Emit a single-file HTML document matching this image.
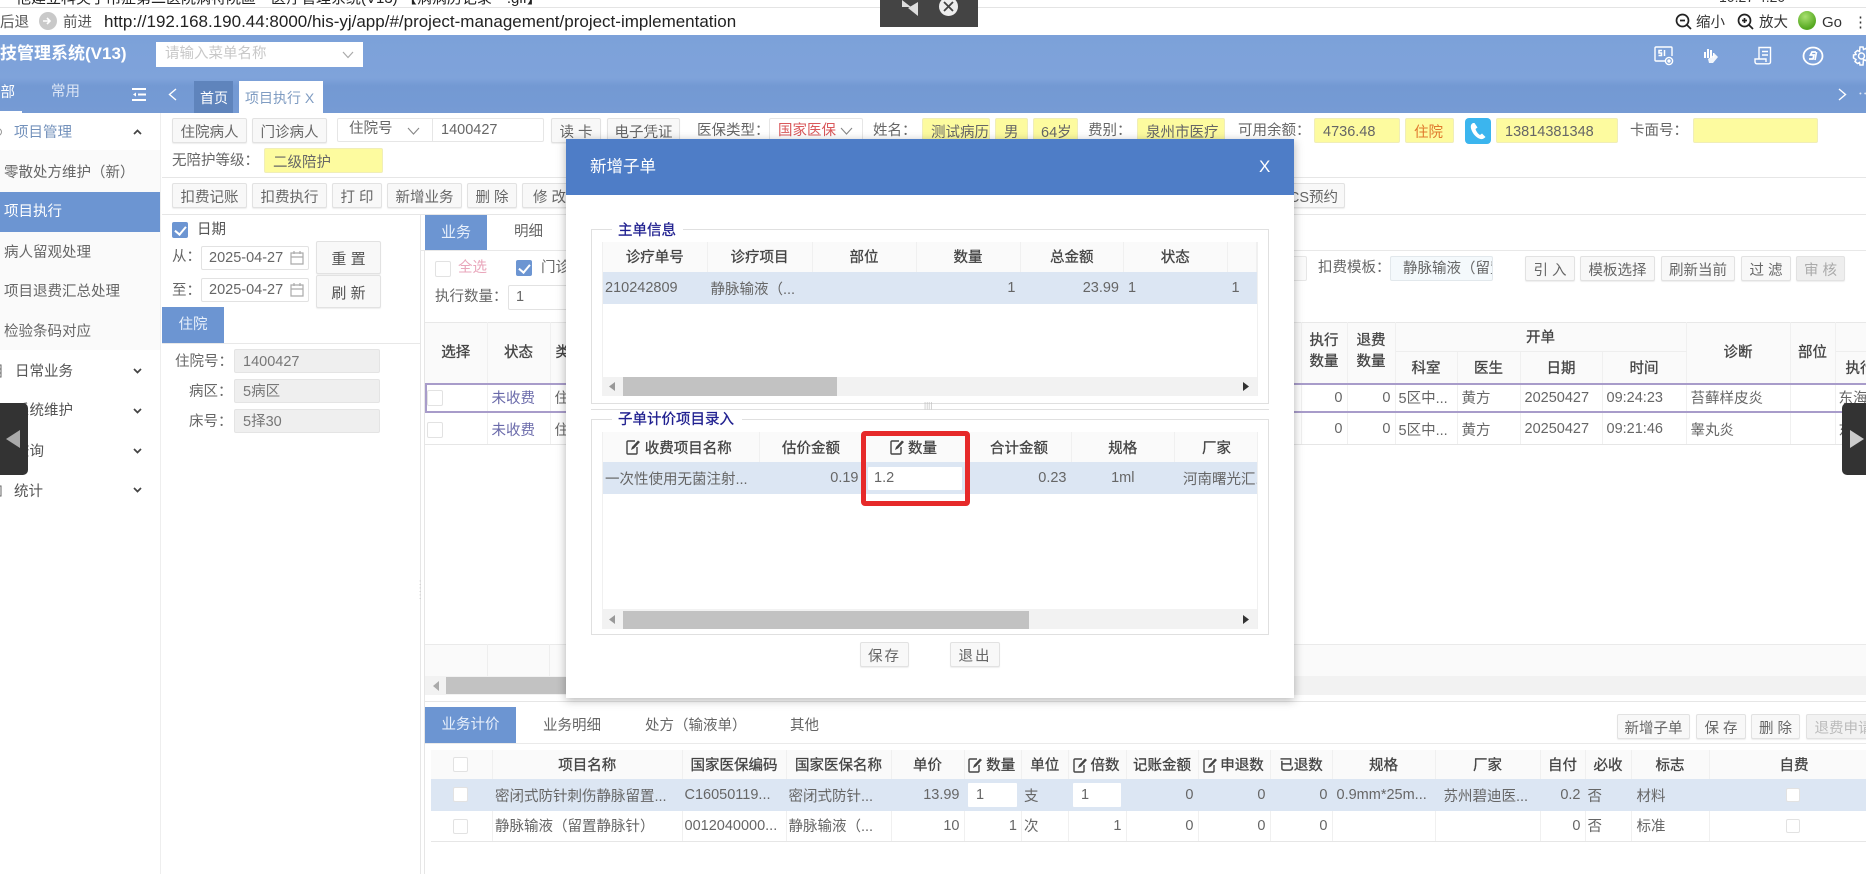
<!DOCTYPE html>
<html lang="zh-CN"><head><meta charset="utf-8"><title>项目执行</title>
<style>
*{box-sizing:border-box}
html,body{margin:0;padding:0;width:1866px;height:874px;overflow:hidden;background:#fff}
body{position:relative;font-family:"Liberation Sans","Noto Sans CJK SC",sans-serif;font-size:14.5px;color:#555;filter:blur(.3px)}
.a{position:absolute}
.t{position:absolute;white-space:nowrap;line-height:20px;height:20px;margin-top:1px}
.b{position:absolute;display:flex;align-items:center;justify-content:center;white-space:nowrap;border:1px solid #e2e2e2;border-radius:2px;background:#f8f8f8;color:#666;height:25px;box-shadow:0 1px 1px #eee;padding-top:2px}
.y{position:absolute;display:flex;align-items:center;white-space:nowrap;overflow:hidden;background:#fdfb9f;border:1px solid #f0eeb8;border-radius:2px;height:25px;top:118px;color:#666;padding-top:2px}
.f{position:absolute;left:234px;width:146px;height:24px;background:#efefef;border:1px solid #e4e4e4;border-radius:2px;padding-left:8px;line-height:25px;color:#777}
.d{position:absolute;left:201px;width:108px;height:24px;border:1px solid #e2e2e2;border-radius:2px;padding-left:7px;line-height:22px;color:#666;background:#fff}
.n{position:absolute;left:4px;white-space:nowrap;line-height:20px;color:#666;margin-top:1px}
.ck{position:absolute;width:16px;height:16px;border-radius:2px;background:#6c95d2}
.ck:after{content:"";position:absolute;left:5px;top:2px;width:5px;height:9px;border:solid #fff;border-width:0 2px 2px 0;transform:rotate(40deg)}
.e{position:absolute;width:16px;height:16px;background:#fff;border:1px solid #e2e2e2;border-radius:2px}
table{border-collapse:collapse;table-layout:fixed;position:absolute;color:#666;background:#fff}
th,td{padding:0 4px;overflow:hidden;white-space:nowrap;font-weight:400;border-right:1px solid #f0f0f0}
th{background:#fafafa;color:#444;-webkit-text-stroke:.3px #444;text-align:center;padding:0}
td.r{text-align:right}
td.p2{padding-left:2px}
tr.s td{background:#dce6f3;border-right-color:#dce6f3}
tr.l td{border-bottom:1px solid #e6e6e6}
.sb{position:absolute;background:#f2f2f2}
.th{position:absolute;top:0;bottom:0;background:#c2c2c2}
.wi{position:absolute;background:#fff;border-radius:1px}
svg{position:absolute;overflow:visible}
</style></head><body>

<svg width="0" height="0" style="position:absolute"><defs>
<symbol id="ed" viewBox="0 0 14 16"><path d="M9 2H2a1 1 0 0 0-1 1v11a1 1 0 0 0 1 1h8a1 1 0 0 0 1-1V8" fill="none" stroke="#444" stroke-width="1.4"/><path d="M5 11l1-3 6-6.5 2 1.5-6 6.5z" fill="#444"/></symbol>
<symbol id="cal" viewBox="0 0 14 15"><path d="M1 3h12v11H1zM1 7h12M4 1v3M10 1v3" fill="none" stroke="#aaa" stroke-width="1.2"/></symbol>
</defs></svg>

<!-- browser chrome -->
<div class="t" style="left:16px;top:-12px;font-size:15px;color:#222">他建立科尖于吊症第二医院病特院區一医疗管理系统(V13) 【病病历记录一.gif】</div>
<div class="t" style="left:1719px;top:-14px;font-size:14px;color:#333">10:27 4:20</div>
<div class="a" style="left:0;top:7px;width:1866px;height:1px;background:#e4e4e4"></div>
<div class="t" style="left:0;top:12px;color:#555;font-size:14.5px">后退</div>
<div class="a" style="left:39px;top:12px;width:18px;height:18px;border-radius:50%;background:#c9c9c9"></div>
<svg style="left:43px;top:16px" width="10" height="10"><path d="M0 5h7M4 2l3 3-3 3" fill="none" stroke="#fff" stroke-width="1.6"/></svg>
<div class="t" style="left:63px;top:12px;color:#555;font-size:14.5px">前进</div>
<div class="t" style="left:104px;top:11px;font-size:17px;color:#222" id="url">http://192.168.190.44:8000/his-yj/app/#/project-management/project-implementation</div>
<svg style="left:1675px;top:13px" width="18" height="18"><circle cx="7.5" cy="7.5" r="6" fill="none" stroke="#222" stroke-width="1.7"/><path d="M5 7.5h5M12 12l4 4" stroke="#222" stroke-width="1.7"/></svg>
<div class="t" style="left:1696px;top:12px;color:#333">缩小</div>
<svg style="left:1737px;top:13px" width="18" height="18"><circle cx="7.5" cy="7.5" r="6" fill="none" stroke="#222" stroke-width="1.7"/><path d="M5 7.5h5M7.5 5v5M12 12l4 4" stroke="#222" stroke-width="1.7"/></svg>
<div class="t" style="left:1759px;top:12px;color:#333">放大</div>
<div class="a" style="left:1798px;top:11px;width:18px;height:19px;border-radius:50%;background:radial-gradient(circle at 40% 30%,#a8e070,#55a820 70%)"></div>
<div class="t" style="left:1822px;top:12px;color:#333;font-size:15px">Go</div>
<div class="t" style="left:1853px;top:12px;color:#333;font-size:15px">⋮</div>

<!-- header -->
<div class="a" style="left:0;top:35px;width:1866px;height:78px;background:linear-gradient(#7ca1d9 0,#7fa3da 55%,#7399d3 65%,#769bd4 100%)"></div>
<div class="t" style="left:-17px;top:43px;font-size:17px;font-weight:700;color:#fff">科技管理系统(V13)</div>
<div class="a" style="left:156px;top:42px;width:207px;height:25px;background:#fff"></div>
<div class="t" style="left:165px;top:43px;color:#c8c8c8">请输入菜单名称</div>
<svg style="left:342px;top:51px" width="12" height="8"><path d="M1 1l5 5.5L11 1" fill="none" stroke="#aaa" stroke-width="1.2"/></svg>
<!-- header icons -->
<svg style="left:1654px;top:46px" width="22" height="22" fill="none" stroke="#fff" stroke-width="1.4"><path d="M11 15H2a1 1 0 0 1-1-1V2a1 1 0 0 1 1-1h15a1 1 0 0 1 1 1v8"/><circle cx="15" cy="15" r="3.6"/><circle cx="15" cy="15" r="1" fill="#fff"/><path d="M8 4.500H5v2.500h2.500v2.500H4.500M10.500 4v6" stroke-width="1.500"/></svg>
<svg style="left:1702px;top:47px" width="18" height="18" fill="#fff"><path d="M2 5h2v6H2zM5 2h2v9H5zM8 3h2v8H8zM11 6h1.500v4l-1.500 1z"/><path d="M6 12l7-5 3 3-5 6H7z" opacity=".9"/></svg>
<svg style="left:1754px;top:46px" width="20" height="20" fill="none" stroke="#fff" stroke-width="1.400"><path d="M5 13V1.500h11.500V16a1.800 1.800 0 0 1-1.800 1.800H3a2 2 0 0 1-2-2V13h11v3"/><path d="M8 5.500h6M8 9h6" /></svg>
<svg style="left:1803px;top:46px" width="21" height="20" fill="none" stroke="#fff" stroke-width="1.800"><ellipse cx="10" cy="10" rx="9.500" ry="8.500"/><path d="M13 6H9L7.500 9H11l-1 4H6M13.500 6l-1.500 8" stroke-width="1.700"/></svg>
<svg style="left:1852px;top:46px" width="20" height="20" fill="none" stroke="#fff" stroke-width="1.500"><circle cx="9.500" cy="10" r="3"/><path d="M8 1h3l.5 2.500 2-1 2.500 2-1 2 2.500.5v3l-2.500.5 1 2-2.500 2-2-1L11 19H8l-.5-2.500-2 1-2.500-2 1-2L1.500 12V9L4 8.500l-1-2 2.500-2 2 1z"/></svg>
<!-- tabs row -->
<div class="t" style="left:-14px;top:82px;color:#fff">全部</div>
<div class="a" style="left:0;top:111px;width:22px;height:2px;background:#fff"></div>
<div class="t" style="left:51px;top:81px;color:#dbe5f5">常用</div>
<svg style="left:132px;top:88px" width="14" height="13" fill="none" stroke="#fff" stroke-width="2"><path d="M0 1h14M6 6.500h8M0 12h14"/><path d="M4 4.500L1 6.500l3 2z" fill="#fff" stroke="none"/></svg>
<svg style="left:168px;top:88px" width="9" height="13" fill="none" stroke="#fff" stroke-width="1.400"><path d="M8 1L1.500 6.500 8 12"/></svg>
<div class="a" style="left:194px;top:81px;width:39px;height:32px;background:#5f84bc"></div>
<div class="t" style="left:200px;top:87px;color:#fff;font-size:14px">首页</div>
<div class="a" style="left:239px;top:81px;width:84px;height:32px;background:#fff"></div>
<div class="t" style="left:245px;top:87px;color:#7f9cc2;font-size:14px">项目执行 X</div>
<svg style="left:1838px;top:88px" width="9" height="13" fill="none" stroke="#fff" stroke-width="1.400"><path d="M1 1l6.500 5.500L1 12"/></svg>
<div class="t" style="left:1858px;top:84px;color:#dfe8f6">⋯</div>

<!-- sidebar -->
<div class="a" style="left:0;top:113px;width:161px;height:761px;background:#fff;border-right:1px solid #eee"></div>
<div class="a" style="left:0;top:150px;width:160px;height:200px;background:#fafafa"></div>
<div class="t" style="left:14px;top:122px;color:#7391bb">项目管理</div>
<svg style="left:133px;top:129px" width="9" height="6" fill="none" stroke="#444" stroke-width="1.700"><path d="M1 5l3.500-3.500L8 5"/></svg>
<div class="n" style="top:162px">零散处方维护（新）</div>
<div class="a" style="left:0;top:192px;width:160px;height:40px;background:#6c95d2"></div>
<div class="n" style="top:201px;color:#fff">项目执行</div>
<div class="n" style="top:242px">病人留观处理</div>
<div class="n" style="top:281px">项目退费汇总处理</div>
<div class="n" style="top:321px">检验条码对应</div>
<div class="t" style="left:15px;top:361px">日常业务</div>
<div class="t" style="left:15px;top:400px">系统维护</div>
<div class="t" style="left:15px;top:441px">查询</div>
<div class="t" style="left:14px;top:481px">统计</div>
<svg style="left:-2px;top:126px" width="6" height="12" fill="none" stroke="#999"><circle cx="0" cy="6" r="3.500"/></svg>
<svg style="left:-2px;top:364px" width="6" height="14" fill="none" stroke="#666"><path d="M0 1h3v12H0M0 5h3M0 9h3"/></svg>
<svg style="left:-2px;top:485px" width="6" height="12" fill="none" stroke="#666"><path d="M0 1h3v10H0"/></svg>
<svg style="left:133px;top:368px" width="9" height="6" fill="none" stroke="#444" stroke-width="1.700"><path d="M1 1l3.500 3.500L8 1"/></svg>
<svg style="left:133px;top:408px" width="9" height="6" fill="none" stroke="#444" stroke-width="1.700"><path d="M1 1l3.500 3.500L8 1"/></svg>
<svg style="left:133px;top:448px" width="9" height="6" fill="none" stroke="#444" stroke-width="1.700"><path d="M1 1l3.500 3.500L8 1"/></svg>
<svg style="left:133px;top:487px" width="9" height="6" fill="none" stroke="#444" stroke-width="1.700"><path d="M1 1l3.500 3.500L8 1"/></svg>

<!-- patient row -->
<div class="b" style="left:172px;top:118px;width:75px">住院病人</div>
<div class="b" style="left:252px;top:118px;width:75px">门诊病人</div>
<div class="a" style="left:337px;top:118px;width:207px;height:24px;border:1px solid #e6e6e6;border-radius:2px"></div>
<div class="a" style="left:432px;top:118px;width:1px;height:24px;background:#e6e6e6"></div>
<div class="t" style="left:349px;top:118px;color:#666">住院号</div>
<svg style="left:407px;top:127px" width="13" height="8" fill="none" stroke="#888" stroke-width="1.100"><path d="M1 1l5.500 6L12 1"/></svg>
<div class="t" style="left:441px;top:119px;color:#666">1400427</div>
<div class="b" style="left:551px;top:118px;width:50px">读 卡</div>
<div class="b" style="left:607px;top:118px;width:73px">电子凭证</div>
<div class="t" style="left:697px;top:120px;color:#666">医保类型：</div>
<div class="a" style="left:769px;top:118px;width:94px;height:24px;border:1px solid #e6e6e6;border-radius:2px"></div>
<div class="t" style="left:778px;top:120px;color:#d9585b">国家医保</div>
<svg style="left:840px;top:127px" width="13" height="8" fill="none" stroke="#888" stroke-width="1.100"><path d="M1 1l5.500 6L12 1"/></svg>
<div class="t" style="left:873px;top:120px;color:#666">姓名：</div>
<div class="y" style="left:922px;width:68px;padding-left:8px">测试病历</div>
<div class="y" style="left:995px;width:33px;padding-left:8px">男</div>
<div class="y" style="left:1033px;width:45px;padding-left:7px">64岁</div>
<div class="t" style="left:1088px;top:120px;color:#666">费别：</div>
<div class="y" style="left:1137px;width:88px;padding-left:8px">泉州市医疗</div>
<div class="t" style="left:1238px;top:120px;color:#666">可用余额：</div>
<div class="y" style="left:1314px;width:86px;padding-left:8px">4736.48</div>
<div class="y" style="left:1405px;width:49px;padding-left:8px;color:#e0792e">住院</div>
<div class="a" style="left:1465px;top:118px;width:26px;height:26px;border-radius:4px;background:#3bb5ee"></div>
<svg style="left:1470px;top:122px" width="17" height="18"><path d="M3 1c-2 1-3 3-1.500 7s5 8 9 9c2 .5 3.500-.5 5-2l-3.500-3.500-2 1.500C8 12 6 9 5.500 7l2-1.500L4.500 1z" fill="#fff"/></svg>
<div class="y" style="left:1496px;width:122px;padding-left:8px">13814381348</div>
<div class="t" style="left:1630px;top:120px;color:#666">卡面号：</div>
<div class="y" style="left:1693px;width:125px"></div>
<div class="t" style="left:172px;top:150px;color:#666">无陪护等级：</div>
<div class="y" style="left:264px;top:148px;width:119px;padding-left:8px">二级陪护</div>
<div class="a" style="left:162px;top:177px;width:1704px;height:1px;background:#e6e6e6"></div>
<!-- toolbar -->
<div class="b" style="left:172px;top:183px;width:75px">扣费记账</div>
<div class="b" style="left:252px;top:183px;width:75px">扣费执行</div>
<div class="b" style="left:332px;top:183px;width:50px">打 印</div>
<div class="b" style="left:387px;top:183px;width:75px">新增业务</div>
<div class="b" style="left:467px;top:183px;width:50px">删 除</div>
<div class="b" style="left:522px;top:183px;width:55px">修 改</div>
<div class="b" style="left:1270px;top:183px;width:75px;justify-content:flex-end;padding-right:6px">CS预约</div>
<div class="a" style="left:162px;top:214px;width:1704px;height:1px;background:#e6e6e6"></div>

<!-- left panel -->
<div class="ck" style="left:172px;top:222px"></div>
<div class="t" style="left:197px;top:219px;color:#555">日期</div>
<div class="t" style="left:172px;top:246px;color:#666">从：</div>
<div class="d" style="top:246px">2025-04-27</div>
<svg style="left:290px;top:250px" width="14" height="15"><use href="#cal"/></svg>
<div class="b" style="left:316px;top:241px;width:65px;height:33px;font-size:15px;color:#555">重 置</div>
<div class="t" style="left:172px;top:280px;color:#666">至：</div>
<div class="d" style="top:278px">2025-04-27</div>
<svg style="left:290px;top:282px" width="14" height="15"><use href="#cal"/></svg>
<div class="b" style="left:316px;top:275px;width:65px;height:33px;font-size:15px;color:#555">刷 新</div>
<div class="a" style="left:162px;top:307px;width:62px;height:37px;background:#6c95d2;color:#e8f0fb;text-align:center;line-height:36px">住院</div>
<div class="a" style="left:162px;top:343px;width:258px;height:1px;background:#e8e8e8"></div>
<div class="t" style="left:175px;top:351px;color:#666">住院号：</div>
<div class="f" style="top:349px">1400427</div>
<div class="t" style="left:189px;top:381px;color:#666">病区：</div>
<div class="f" style="top:379px">5病区</div>
<div class="t" style="left:189px;top:411px;color:#666">床号：</div>
<div class="f" style="top:409px">5择30</div>
<div class="a" style="left:420px;top:215px;width:1px;height:659px;background:#e6e6e6"></div>
<div class="a" style="left:424px;top:250px;width:1px;height:624px;background:#e6e6e6"></div>
<div class="t" style="left:419px;top:578px;color:#bbb;font-size:8px;line-height:7px;width:4px;white-space:normal;height:auto">: : :</div>

<!-- main area -->
<div class="a" style="left:425px;top:215px;width:62px;height:35px;background:#6c95d2;color:#e8f0fb;text-align:center;line-height:35px;font-size:15px">业务</div>
<div class="t" style="left:514px;top:221px;color:#666">明细</div>
<div class="a" style="left:420px;top:250px;width:1446px;height:1px;background:#e8e8e8"></div>
<div class="e" style="left:435px;top:261px"></div>
<div class="t" style="left:458px;top:257px;color:#e9a6bb">全选</div>
<div class="ck" style="left:516px;top:260px"></div>
<div class="t" style="left:541px;top:257px;color:#666">门诊</div>
<div class="t" style="left:435px;top:286px;color:#666">执行数量：</div>
<div class="a" style="left:508px;top:285px;width:70px;height:25px;border:1px solid #e2e2e2;border-radius:2px;padding-left:7px;line-height:23px;color:#666">1</div>
<div class="a" style="left:1270px;top:256px;width:37px;height:25px;border:1px solid #e6e6e6;border-radius:2px;background:#fafafa"></div>
<div class="t" style="left:1318px;top:257px;color:#666">扣费模板：</div>
<div class="a" style="left:1390px;top:256px;width:103px;height:25px;background:#f4f9fc;border:1px solid #e2e8ec;border-radius:2px;overflow:hidden;white-space:nowrap;padding-left:12px;line-height:24px;color:#666">静脉输液（留置静脉针）</div>
<div class="b" style="left:1525px;top:256px;width:50px">引 入</div>
<div class="b" style="left:1580px;top:256px;width:75px">模板选择</div>
<div class="b" style="left:1661px;top:256px;width:74px">刷新当前</div>
<div class="b" style="left:1741px;top:256px;width:50px">过 滤</div>
<div class="b" style="left:1796px;top:256px;width:49px;background:#eee;color:#aaa">审 核</div>

<!-- main table -->
<table style="left:425px;top:322px;width:1500px;height:122px;border-top:1px solid #e8e8e8">
<colgroup><col style="width:62px"><col style="width:63px"><col style="width:751px"><col style="width:46px"><col style="width:48px"><col style="width:62px"><col style="width:63px"><col style="width:82px"><col style="width:84px"><col style="width:104px"><col style="width:45px"><col style="width:90px"></colgroup>
<tr style="height:29px"><th rowspan="2" style="padding-bottom:4px">选择</th><th rowspan="2" style="padding-bottom:4px">状态</th><th rowspan="2" style="text-align:left;padding-left:5px;padding-bottom:4px">类别</th><th rowspan="2" style="line-height:21px;padding-bottom:4px">执行<br>数量</th><th rowspan="2" style="line-height:21px;padding-bottom:4px">退费<br>数量</th><th colspan="4" style="border-bottom:1px solid #eee;padding-bottom:2px">开单</th><th rowspan="2" style="padding-bottom:4px">诊断</th><th rowspan="2" style="padding-bottom:4px">部位</th><th style="border-bottom:1px solid #eee"></th></tr>
<tr style="height:33px"><th style="padding-bottom:2px">科室</th><th style="padding-bottom:2px">医生</th><th style="padding-bottom:2px">日期</th><th style="padding-bottom:2px">时间</th><th style="text-align:left;padding-left:10px;padding-bottom:2px">执行科室</th></tr>
<tr style="height:28px"><td></td><td style="color:#6a6aaa;padding-bottom:2px">未收费</td><td style="padding-bottom:2px">住院</td><td class="r" style="padding-bottom:2px">0</td><td class="r" style="padding-bottom:2px">0</td><td style="padding:0 3px 2px">5区中...</td><td style="padding-bottom:2px">黄方</td><td style="padding-bottom:2px">20250427</td><td style="padding-bottom:2px">09:24:23</td><td style="padding-bottom:2px">苔藓样皮炎</td><td></td><td style="padding-left:3px;padding-bottom:2px">东海院区</td></tr>
<tr style="height:32px" class="l"><td></td><td style="color:#6a6aaa;padding-top:2px">未收费</td><td style="padding-top:2px">住院</td><td class="r" style="padding-top:2px">0</td><td class="r" style="padding-top:2px">0</td><td style="padding:2px 3px 0">5区中...</td><td style="padding-top:2px">黄方</td><td style="padding-top:2px">20250427</td><td style="padding-top:2px">09:21:46</td><td style="padding-top:2px">睾丸炎</td><td></td><td style="padding-left:3px;padding-top:2px">东海院区</td></tr>
</table>
<div class="a" style="left:425px;top:383px;width:1441px;height:2px;background:#a89cca"></div>
<div class="a" style="left:425px;top:411px;width:1441px;height:2px;background:#a89cca"></div>
<div class="a" style="left:425px;top:383px;width:2px;height:30px;background:#a89cca"></div>
<div class="e" style="left:427px;top:390px"></div>
<div class="e" style="left:427px;top:422px"></div>
<!-- footer + scrollbar of main table -->
<div class="a" style="left:425px;top:644px;width:1441px;height:32px;background:#fafafa;border-top:1px solid #eaeaea"></div>
<div class="a" style="left:487px;top:644px;width:1px;height:32px;background:#eee"></div>
<div class="a" style="left:549px;top:644px;width:1px;height:32px;background:#eee"></div>
<div class="sb" style="left:425px;top:676px;width:1441px;height:19px">
  <div class="th" style="left:21px;width:300px;top:1px;bottom:1px"></div>
  <svg style="left:8px;top:5px" width="6" height="10"><path d="M6 0v10L0 5z" fill="#aaa"/></svg>
</div>
<div class="a" style="left:425px;top:701px;width:1441px;height:1px;background:#e6e6e6"></div>

<!-- bottom panel -->
<div class="a" style="left:425px;top:707px;width:91px;height:37px;background:#6c95d2;color:#e8f0fb;text-align:center;line-height:36px">业务计价</div>
<div class="t" style="left:543px;top:715px;color:#666">业务明细</div>
<div class="t" style="left:645px;top:715px;color:#666">处方（输液单）</div>
<div class="t" style="left:790px;top:715px;color:#666">其他</div>
<div class="a" style="left:425px;top:743px;width:1441px;height:1px;background:#eaeaea"></div>
<div class="b" style="left:1617px;top:714px;width:73px">新增子单</div>
<div class="b" style="left:1696px;top:714px;width:50px">保 存</div>
<div class="b" style="left:1751px;top:714px;width:49px">删 除</div>
<div class="b" style="left:1806px;top:714px;width:75px;background:#f2f2f2;color:#bbb">退费申请</div>

<table style="left:431px;top:750px;width:1448px">
<colgroup><col style="width:61.500px"><col style="width:189.500px"><col style="width:104px"><col style="width:105px"><col style="width:73px"><col style="width:57.500px"><col style="width:46.500px"><col style="width:58px"><col style="width:72px"><col style="width:72px"><col style="width:62px"><col style="width:103px"><col style="width:105px"><col style="width:45px"><col style="width:46px"><col style="width:78px"><col style="width:170px"></colgroup>
<tr style="height:29px"><th></th><th>项目名称</th><th>国家医保编码</th><th>国家医保名称</th><th>单价</th><th style="padding-left:16px">数量</th><th>单位</th><th style="padding-left:16px">倍数</th><th>记账金额</th><th style="padding-left:16px">申退数</th><th>已退数</th><th>规格</th><th>厂家</th><th>自付</th><th>必收</th><th>标志</th><th>自费</th></tr>
<tr style="height:32px" class="s"><td></td><td class="p2">密闭式防针刺伤静脉留置...</td><td class="p2">C16050119...</td><td class="p2">密闭式防针...</td><td class="r">13.99</td><td></td><td class="p2">支</td><td></td><td class="r">0</td><td class="r">0</td><td class="r">0</td><td>0.9mm*25m...</td><td style="padding-left:8px">苏州碧迪医...</td><td class="r">0.2</td><td class="p2">否</td><td style="padding-left:5px">材料</td><td></td></tr>
<tr style="height:30px" class="l"><td></td><td class="p2">静脉输液（留置静脉针）</td><td class="p2">0012040000...</td><td class="p2">静脉输液（...</td><td class="r">10</td><td class="r">1</td><td class="p2">次</td><td class="r">1</td><td class="r">0</td><td class="r">0</td><td class="r">0</td><td></td><td></td><td class="r">0</td><td class="p2">否</td><td style="padding-left:5px">标准</td><td></td></tr>
</table>
<div class="e" style="left:453px;top:757px;width:15px;height:15px"></div>
<div class="e" style="left:453px;top:787px;width:15px;height:15px"></div>
<div class="e" style="left:453px;top:819px;width:15px;height:15px"></div>
<div class="e" style="left:1786px;top:788px;width:14px;height:14px"></div>
<div class="e" style="left:1786px;top:819px;width:14px;height:14px"></div>
<svg style="left:968px;top:757px" width="14" height="16"><use href="#ed"/></svg>
<svg style="left:1073px;top:757px" width="14" height="16"><use href="#ed"/></svg>
<svg style="left:1203px;top:757px" width="14" height="16"><use href="#ed"/></svg>
<div class="wi" style="left:968px;top:783px;width:49px;height:24px;padding-left:8px;line-height:24px;color:#666">1</div>
<div class="wi" style="left:1073px;top:783px;width:48px;height:24px;padding-left:8px;line-height:24px;color:#666">1</div>

<!-- dark side handles -->
<div class="a" style="left:0;top:403px;width:28px;height:72px;background:#333;border-radius:0 5px 5px 0"></div>
<svg style="left:6px;top:430px" width="15" height="18"><path d="M14 0v18L0 9z" fill="#aaa"/></svg>
<div class="a" style="left:1842px;top:403px;width:24px;height:72px;background:#333;border-radius:5px 0 0 5px"></div>
<svg style="left:1850px;top:430px" width="15" height="18"><path d="M0 0v18l14-9z" fill="#ccc"/></svg>
<!-- top overlay -->
<div class="a" style="left:880px;top:0;width:98px;height:27px;background:#444"></div>
<svg style="left:900px;top:0" width="20" height="16"><path d="M2 0l9 7-9 0zM18 2v14L8 8z" fill="#ddd"/></svg>
<div class="a" style="left:939px;top:-3px;width:19px;height:19px;border-radius:50%;background:#eee"></div>
<svg style="left:943px;top:1px" width="11" height="11"><path d="M1 1l9 9M10 1l-9 9" stroke="#444" stroke-width="1.800"/></svg>

<!-- dialog -->
<div class="a" style="left:566px;top:139px;width:728px;height:559px;background:#fff;box-shadow:0 2px 9px rgba(0,0,0,.3)"></div>
<div class="a" style="left:566px;top:139px;width:728px;height:56px;background:#4e7dc7"></div>
<div class="t" style="left:590px;top:156px;color:#fff;font-size:16.500px">新增子单</div>
<div class="t" style="left:1259px;top:156px;color:#fff;font-size:17px">X</div>

<div class="a" style="left:591px;top:229px;width:678px;height:175px;border:1px solid #e0e0e0"></div>
<div class="a" style="left:612px;top:222px;width:71px;height:14px;background:#fff"></div>
<div class="t" style="left:618px;top:220px;color:#1f1f8f;-webkit-text-stroke:.3px #1f1f8f">主单信息</div>
<div class="a" style="left:602px;top:242px;width:655.500px;height:154px;overflow:hidden;border:1px solid #f0f0f0;border-width:0 1px 0 1px">
<table style="left:0;top:0;width:654px">
<colgroup><col style="width:104px"><col style="width:105px"><col style="width:104px"><col style="width:104px"><col style="width:103.500px"><col style="width:103.500px"><col></colgroup>
<tr style="height:30px"><th style="padding-bottom:2px">诊疗单号</th><th style="padding-bottom:2px">诊疗项目</th><th style="padding-bottom:2px">部位</th><th style="padding-bottom:2px">数量</th><th style="padding-bottom:2px">总金额</th><th style="padding-bottom:2px">状态</th><th></th></tr>
<tr style="height:32px" class="s"><td style="padding-left:2px">210242809</td><td style="padding-left:3px">静脉输液（...</td><td></td><td class="r">1</td><td class="r">23.99</td><td>1</td><td>1</td></tr>
</table>
</div>
<div class="sb" style="left:602px;top:377px;width:655px;height:19px">
  <div class="th" style="left:21px;width:214px"></div>
  <svg style="left:7px;top:5px" width="6" height="9"><path d="M6 0v9L0 4.500z" fill="#999"/></svg>
  <svg style="left:641px;top:5px" width="6" height="9"><path d="M0 0v9l6-4.500z" fill="#333"/></svg>
</div>
<div class="a" style="left:591px;top:409px;width:678px;height:1px;background:#e0e0e0"></div>
<div class="t" style="left:924px;top:402px;font-size:8px;line-height:6px;height:6px;color:#bbb">||||</div>

<div class="a" style="left:591px;top:419px;width:678px;height:216px;border:1px solid #e0e0e0"></div>
<div class="a" style="left:612px;top:412px;width:130px;height:14px;background:#fff"></div>
<div class="t" style="left:618px;top:409px;color:#1f1f8f;-webkit-text-stroke:.3px #1f1f8f">子单计价项目录入</div>
<div class="a" style="left:602px;top:432px;width:655.500px;height:197px;overflow:hidden;border:1px solid #f0f0f0;border-width:0 1px 0 1px">
<table style="left:0;top:0;width:654px">
<colgroup><col style="width:156px"><col style="width:104px"><col style="width:104px"><col style="width:104px"><col style="width:103.500px"><col style="width:84px"></colgroup>
<tr style="height:30px"><th style="padding-left:15px">收费项目名称</th><th>估价金额</th><th style="padding-left:15px">数量</th><th>合计金额</th><th>规格</th><th>厂家</th></tr>
<tr style="height:32px" class="s"><td style="padding-left:2px">一次性使用无菌注射...</td><td class="r">0.19</td><td></td><td class="r">0.23</td><td style="text-align:center">1ml</td><td style="padding-left:8px;text-overflow:clip">河南曙光汇...</td></tr>
</table>
</div>
<svg style="left:626px;top:439px" width="14" height="16"><use href="#ed"/></svg>
<svg style="left:890px;top:439px" width="14" height="16"><use href="#ed"/></svg>
<div class="wi" style="left:868px;top:467px;width:94px;height:23px;padding-left:6px;line-height:23px;color:#666">1.2</div>
<div class="a" style="left:861px;top:431px;width:109px;height:75px;border:5px solid #e62a2a;border-radius:4px"></div>
<div class="sb" style="left:602px;top:609px;width:655px;height:20px">
  <div class="th" style="left:21px;width:406px;top:2px"></div>
  <svg style="left:7px;top:6px" width="6" height="9"><path d="M6 0v9L0 4.500z" fill="#999"/></svg>
  <svg style="left:641px;top:6px" width="6" height="9"><path d="M0 0v9l6-4.500z" fill="#333"/></svg>
</div>
<div class="b" style="left:860px;top:642px;width:49px;letter-spacing:2px">保存</div>
<div class="b" style="left:950px;top:642px;width:50px;letter-spacing:2px">退出</div>
</body></html>
